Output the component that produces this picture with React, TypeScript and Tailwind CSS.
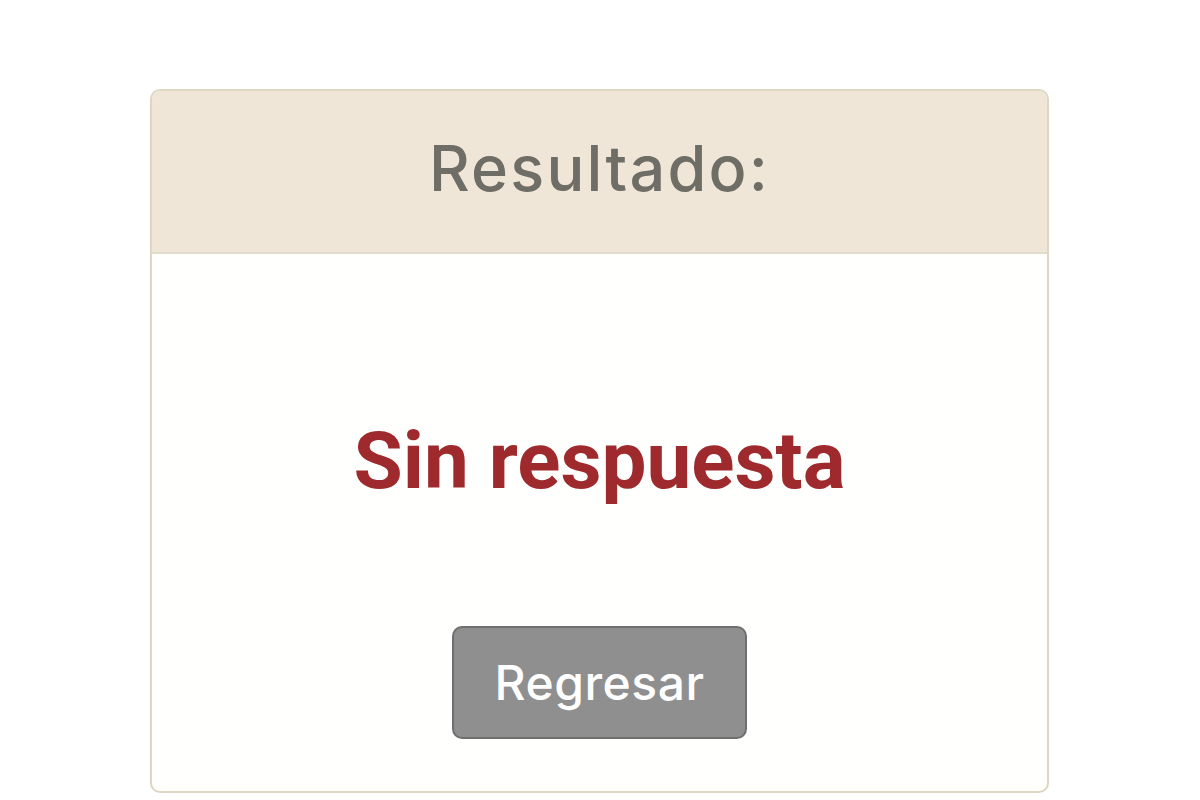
import React from 'react';

const App = () => {
    return (
        <div className="w-[1200px] h-[800px] bg-white overflow-hidden">
            <div className="pt-[89px] pl-[150px]">
                <div className="w-[899px] h-[704px] border-2 border-[#ddd6c3] rounded-[10px] bg-[#fffffd] flex flex-col overflow-hidden">
                    <div className="h-[163px] bg-[#efe6d7] border-b-2 border-[#e2dccd] flex items-center justify-center pb-[6px]">
                        <h1 className="text-[63px] text-[#6e6d66] font-[Inter,sans-serif] font-medium tracking-[2.2px] leading-none">Resultado:</h1>
                    </div>
                    <div className="flex-1 flex flex-col items-center">
                        <p className="mt-[167px] text-[80px] font-bold text-[#9e2a2d] font-[Roboto,sans-serif] leading-none">Sin respuesta</p>
                        <button className="mt-[125px] w-[295px] h-[113px] bg-[#8f8f8f] border-2 border-[#6f6f6f] rounded-[10px] text-white text-[48px] font-[Inter,sans-serif] font-medium tracking-[0.5px] leading-none">
                            Regresar
                        </button>
                    </div>
                </div>
            </div>
        </div>
    );
};

export default App;
